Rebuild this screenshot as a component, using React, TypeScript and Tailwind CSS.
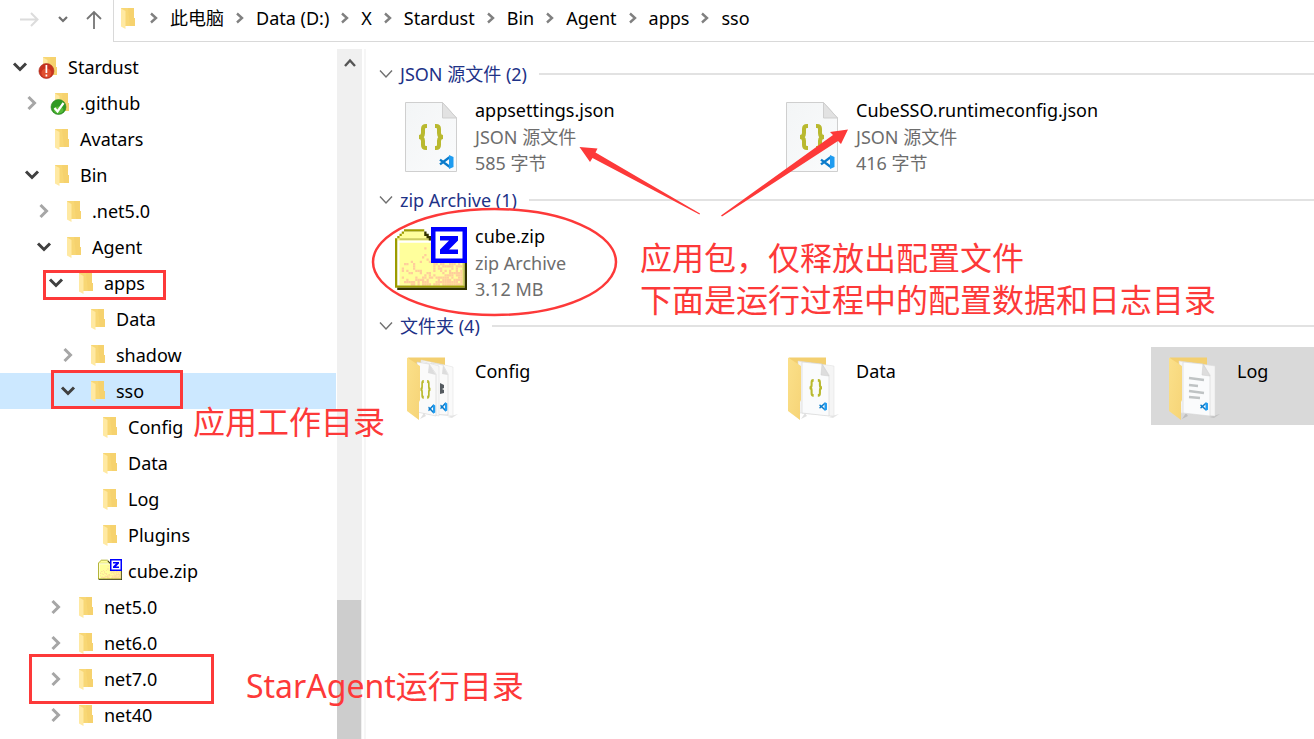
import type { ReactNode } from 'react';

type NodeIcon = 'folder' | 'error' | 'ok' | 'zip';

interface TreeNode {
  name: string;
  level: number;
  state?: 'open' | 'closed';
  icon?: NodeIcon;
  selected?: boolean;
}

const tree: TreeNode[] = [
  { name: 'Stardust', level: 0, state: 'open', icon: 'error' },
  { name: '.github', level: 1, state: 'closed', icon: 'ok' },
  { name: 'Avatars', level: 1 },
  { name: 'Bin', level: 1, state: 'open' },
  { name: '.net5.0', level: 2, state: 'closed' },
  { name: 'Agent', level: 2, state: 'open' },
  { name: 'apps', level: 3, state: 'open' },
  { name: 'Data', level: 4 },
  { name: 'shadow', level: 4, state: 'closed' },
  { name: 'sso', level: 4, state: 'open', selected: true },
  { name: 'Config', level: 5 },
  { name: 'Data', level: 5 },
  { name: 'Log', level: 5 },
  { name: 'Plugins', level: 5 },
  { name: 'cube.zip', level: 5, icon: 'zip' },
  { name: 'net5.0', level: 3, state: 'closed' },
  { name: 'net6.0', level: 3, state: 'closed' },
  { name: 'net7.0', level: 3, state: 'closed' },
  { name: 'net40', level: 3, state: 'closed' },
];

const indents = ['pl-3', 'pl-6', 'pl-9', 'pl-12', 'pl-15', 'pl-18'];

const crumbs = ['此电脑', 'Data (D:)', 'X', 'Stardust', 'Bin', 'Agent', 'apps', 'sso'];

function Chevron({ open }: { open: boolean }) {
  return open ? (
    <svg viewBox="0 0 16 16" className="size-4 text-[#404040]" fill="none" stroke="currentColor" strokeWidth="3">
      <path d="M2 4.5 8 10.500 14 4.500" />
    </svg>
  ) : (
    <svg viewBox="0 0 16 16" className="size-4 text-[#a6a6a6]" fill="none" stroke="currentColor" strokeWidth="3">
      <path d="M4.500 2 10.500 8 4.500 14" />
    </svg>
  );
}

function FolderIcon({ badge }: { badge?: 'error' | 'ok' }) {
  return (
    <svg viewBox="0 0 20 24" className="h-6 w-5 shrink-0 overflow-visible">
      <path d="M5 2h13v10h1v8H8z" fill="#f8d775" />
      <path d="M12 2h6v10h1v8h-5z" fill="#f5cf69" opacity=".6" />
      <path d="M5 2.500 9.500 5v18L5 20.500z" fill="#ffe9a2" />
      {badge === 'error' && (
        <g>
          <circle cx="8.400" cy="16" r="7.500" fill="#c8321e" stroke="#a82a1c" strokeWidth=".6" />
          <ellipse cx="8.400" cy="18" rx="5" ry="4.500" fill="#e85a35" opacity=".75" />
          <path d="M8.400 10v8M8.400 19.500v2" stroke="#fff" strokeWidth="1.700" />
        </g>
      )}
      {badge === 'ok' && (
        <g>
          <circle cx="8.500" cy="16" r="7.500" fill="#2f9a24" stroke="#27801f" strokeWidth=".6" />
          <ellipse cx="8.500" cy="19" rx="5" ry="3.500" fill="#62c33c" opacity=".8" />
          <path d="m4.500 17 3 3.500 6-8.500" stroke="#fff" strokeWidth="2.200" fill="none" />
        </g>
      )}
    </svg>
  );
}

// shading dots of the archive box, denser towards the lower right corner
const dots: [number, number][] = [];
for (let y = 8; y < 25; y++) {
  for (let x = 3; x < 30; x++) {
    const weight = ((x - 3) / 27) * 0.65 + ((y - 8) / 16) * 0.5;
    const noise = (Math.abs(Math.sin(x * 12.9898 + y * 78.233)) * 437.585) % 1;
    if (noise < weight - 0.15) dots.push([x, y]);
  }
}

function ZipArt() {
  return (
    <>
      <path d="M1 4 4 1h9l3 3h15v21H1z" fill="#ffff9c" />
      <path d="M2 4h28v1H2zM30 5h1v20h-1z" fill="#cece63" />
      <path d="M1 5h29v1H1zM1 5h1v20H1z" fill="#fff" />
      {dots.map(([x, y]) => (
        <rect key={`${x}-${y}`} x={x} y={y} width="1" height="1" fill="#ffce9c" />
      ))}
      <path d="M0 4h1v21H0zM1 3h1v1H1zM2 2h1v1H2zM3 1h1v1H3zM4 0h9v1H4zM0 25h31v1H0z" fill="#9c9c00" />
      <path d="M13 1h1v1h1v1h1v2h-1V4h-1V3h-1zM31 5h1v22H1v-1h30z" fill="#313100" />
      <path d="M16 -1h16v16H16z" fill="#00f" />
      <path d="M18 1h12v12H18z" fill="#fff" />
      <path d="M20 3h8v2l-4 4h4v2h-8V9l4-4h-4z" fill="#00f" />
    </>
  );
}

function ZipIcon() {
  return (
    <svg viewBox="0 -1 32 28" className="mb-1 -mr-1 h-[21px] w-6 shrink-0">
      <ZipArt />
    </svg>
  );
}

function TileIcon({ children }: { children: ReactNode }) {
  return (
    <svg viewBox="0 0 72 76" className="mt-[3px] h-[76px] w-[72px] shrink-0">
      <defs>
        <linearGradient id="sheet" x1="0" y1="0" x2="1" y2="1">
          <stop offset="0" stopColor="#f3f5f6" />
          <stop offset="1" stopColor="#fafbfc" />
        </linearGradient>
        <linearGradient id="cover" x1="0" y1="0" x2="1" y2="1">
          <stop offset="0" stopColor="#fbe08a" />
          <stop offset="1" stopColor="#f6d477" />
        </linearGradient>
      </defs>
      {children}
    </svg>
  );
}

function CodeMark() {
  return (
    <>
      <path d="M1 4.600 10.500 11.800M1 9.400 10.500 2.200" stroke="#0a7bcb" strokeWidth="2.400" fill="none" />
      <path d="M10 0 14.500 2v10L10 14z" fill="#1f9cf0" />
    </>
  );
}

function Braces() {
  return (
    <g fill="none" stroke="#b9b92f" strokeWidth="4">
      <path d="M9 2H8Q5 2 5 5v4q0 4-4 4 4 0 4 4v4q0 3 3 3h1" />
      <path d="M17 2h1q3 0 3 3v4q0 4 4 4-4 0-4 4v4q0 3-3 3h-1" />
    </g>
  );
}

function JsonIcon() {
  return (
    <TileIcon>
      <path d="M10.500 4.500h37L61.500 20v53.500h-51z" fill="url(#sheet)" stroke="#cfcfcf" />
      <path d="M47.500 4.500V20h14z" fill="#e2e2e2" stroke="#cfcfcf" />
      <g transform="translate(23 26)">
        <Braces />
      </g>
      <g transform="translate(44 57)">
        <CodeMark />
      </g>
    </TileIcon>
  );
}

function CubeIcon() {
  return (
    <TileIcon>
      <g transform="translate(0 5.250) scale(2.250)">
        <ZipArt />
      </g>
    </TileIcon>
  );
}

function OpenFolderIcon({ kind }: { kind: 'config' | 'data' | 'log' }) {
  return (
    <TileIcon>
      <path d="M52 67 63 64 57 68z" fill="#000" opacity=".1" />
      <path d="M25 69 31 66 29 63z" fill="#000" opacity=".12" />
      <path d="M13 7.500h37V60H20z" fill="#f3cf70" />
      {kind === 'config' ? (
        <>
          <path d="M26 10 50 15l8 2v49l-30-3z" fill="#fafafa" stroke="#dcdcdc" strokeWidth=".5" />
          <path d="M36 13 48 15l5 9v41l-17-1z" fill="#fafafa" stroke="#d4d4d4" strokeWidth=".6" />
          <path d="m48 15-1 9 6 1z" fill="#ddd" />
          <path d="m45 33 4 2v3l-2 1 2 1v3l-4 1z" fill="#555b60" />
          <g transform="translate(45 52) scale(.500 .700)">
            <CodeMark />
          </g>
          <path d="m26 11 18 5v50l-18-4z" fill="#f7f7f7" stroke="#d9d9d9" strokeWidth=".5" />
          <path d="m22 12 12 2 7 10v42l-19-4z" fill="#fafafa" stroke="#d4d4d4" strokeWidth=".6" />
          <path d="m34 14-1 9 8 2z" fill="#ddd" />
        </>
      ) : (
        <>
          <path d="M22 11 58 16v50l-34-3z" fill="#f5f5f5" stroke="#dcdcdc" strokeWidth=".5" />
          <path d="m26 12 20 2 7 11v41l-27-3z" fill="#fafbfc" stroke="#d4d4d4" strokeWidth=".6" />
          <path d="m46 14-1 11 8 1z" fill="#ddd" stroke="#ccc" strokeWidth=".5" />
        </>
      )}
      {kind === 'log' ? (
        <path d="m32 28 15 2m-15 5 9 1m-9 5 15 2m-15 4 11 1" stroke="#bfc3c4" strokeWidth="2.500" fill="none" />
      ) : (
        <g transform={kind === 'data' ? 'translate(33 29) scale(.520 .680)' : 'translate(25 30) scale(.420 .720)'}>
          <Braces />
        </g>
      )}
      <g transform={kind === 'config' ? 'translate(33 54) scale(.500 .700)' : 'translate(43 52) scale(.550 .650)'}>
        <CodeMark />
      </g>
      <path d="M12 7.500 25 16v34l-1 2v18L12 61z" fill="url(#cover)" />
    </TileIcon>
  );
}

interface TileProps {
  icon: ReactNode;
  name: string;
  details?: string[];
  selected?: boolean;
}

function Tile({ icon, name, details, selected }: TileProps) {
  return (
    <li className={`flex h-[78px] gap-2 pl-1.5 ${selected ? 'bg-[#d9d9d9]' : ''}`}>
      {icon}
      <div className={`leading-[26px] whitespace-nowrap ${details ? 'pt-0.5' : 'pt-[11px]'}`}>
        <p className="mb-px text-black">{name}</p>
        {details?.map((line) => (
          <p key={line} className="text-[#6d6d6d]">{line}</p>
        ))}
      </div>
    </li>
  );
}

function Group({ title, children }: { title: string; children: ReactNode }) {
  return (
    <section className="mb-1.5">
      <h2 className="flex h-[42px] items-center text-[#1e3287]">
        <button type="button" aria-label={`折叠 ${title}`} className="mr-1.5 ml-3">
          <svg viewBox="0 0 16 16" className="size-4" fill="none" stroke="#707070" strokeWidth="1.400">
            <path d="m2 4.500 6 6.500 6-6.500" />
          </svg>
        </button>
        {title}
        <span className="ml-3 h-0.5 flex-1 bg-[#e2e2e2]" />
      </h2>
      <ul className="grid grid-cols-[repeat(3,381px)] pl-[23px]">{children}</ul>
    </section>
  );
}

function TreeRow({ node }: { node: TreeNode }) {
  return (
    <li className={`flex h-9 items-center gap-2.5 ${indents[node.level]} ${node.selected ? 'bg-[#cce8ff]' : ''}`}>
      {node.state ? (
        <button type="button" aria-label={node.name} className="size-4 shrink-0">
          <Chevron open={node.state === 'open'} />
        </button>
      ) : (
        <span className="size-4 shrink-0" />
      )}
      {node.icon === 'zip' ? (
        <ZipIcon />
      ) : (
        <FolderIcon badge={node.icon === 'error' || node.icon === 'ok' ? node.icon : undefined} />
      )}
      <span>{node.name}</span>
    </li>
  );
}

function Annotations() {
  return (
    <div className="pointer-events-none absolute inset-0 overflow-hidden text-[32px] leading-[42px] whitespace-nowrap text-[#fd3939]">
      <svg className="absolute inset-0 size-full" fill="none" stroke="#fd3939" strokeWidth="3">
        <rect x="44.500" y="271.500" width="120" height="27" />
        <rect x="52.500" y="371.500" width="129" height="36" />
        <rect x="30.500" y="655.500" width="182" height="47" />
        <ellipse cx="494.500" cy="262" rx="121.500" ry="53" strokeWidth="2.500" />
        <g fill="#fd3939" stroke="none">
          <path d="m579.500 147 18 1.500-2 4L700 213.500l-.500 1L592.500 158l-2.500 4z" />
          <path d="m848 129.500-18 2.500 3 3-112 80.500 1 1 116-75.500 3 3z" />
        </g>
      </svg>
      <p className="absolute top-[401px] left-[193px]">应用工作目录</p>
      <p className="absolute top-[237px] left-[640px]">
        应用包，仅释放出配置文件
        <br />
        下面是运行过程中的配置数据和日志目录
      </p>
      <p className="absolute top-[665px] left-[246px]">StarAgent运行目录</p>
    </div>
  );
}

export default function App() {
  return (
    <div className="relative flex min-h-screen flex-col overflow-hidden bg-white font-['Noto_Sans','Noto_Sans_CJK_SC',sans-serif] text-lg text-black">
      <header className="flex h-[42px]">
        <div className="flex w-[113px] shrink-0 items-center pb-0.5">
          <button type="button" aria-label="前进" className="ml-[19px]">
            <svg viewBox="0 0 20 20" className="size-5" fill="none" stroke="#dcdcdc" strokeWidth="2">
              <path d="M1 9.500h17M12 3l6.500 6.500L12 16" />
            </svg>
          </button>
          <button type="button" aria-label="最近的位置" className="ml-[19px]">
            <svg viewBox="0 0 10 10" className="size-2.5" fill="none" stroke="#707070" strokeWidth="2.200">
              <path d="m1 2 4 4 4-4" />
            </svg>
          </button>
          <button type="button" aria-label="向上" className="ml-[17px]">
            <svg viewBox="0 0 18 20" className="h-5 w-[18px]" fill="none" stroke="#757575" strokeWidth="1.800">
              <path d="M9 19V2M2 9l7-7 7 7" />
            </svg>
          </button>
        </div>
        <nav className="flex flex-1 items-center border-b border-l border-[#d9d9d9] pb-1.5 pl-0.5 whitespace-nowrap">
          <FolderIcon />
          <ol className="ml-0.5 flex items-center">
            {crumbs.map((crumb) => (
              <li key={crumb} className="flex items-center">
                <svg viewBox="0 0 8 12" className="mx-3 h-3 w-2" fill="none" stroke="#808080" strokeWidth="2.400">
                  <path d="m1 1.500 5 4.500-5 4.500" />
                </svg>
                <a href="#">{crumb}</a>
              </li>
            ))}
          </ol>
        </nav>
      </header>

      <div className="flex flex-1 pt-[7px]">
        <aside className="flex w-[366px] shrink-0 border-r-2 border-[#f6f6f6]">
          <ul className="mr-px flex-1">
            {tree.map((node, i) => (
              <TreeRow key={i} node={node} />
            ))}
          </ul>
          <div className="mr-0.5 flex w-[25px] flex-col justify-between bg-[#f0f0f0]">
            <button type="button" aria-label="向上滚动" className="flex h-7 items-center justify-center">
              <svg viewBox="0 0 12 10" className="h-2.5 w-3" fill="none" stroke="#555" strokeWidth="2.400">
                <path d="m1 8 5-5.500L11 8" />
              </svg>
            </button>
            <div className="mr-px h-[139px] bg-[#cdcdcd]" />
          </div>
        </aside>

        <main className="min-w-0 flex-1 overflow-hidden pt-1">
          <Group title="JSON 源文件 (2)">
            <Tile icon={<JsonIcon />} name="appsettings.json" details={['JSON 源文件', '585 字节']} />
            <Tile icon={<JsonIcon />} name="CubeSSO.runtimeconfig.json" details={['JSON 源文件', '416 字节']} />
          </Group>
          <Group title="zip Archive (1)">
            <Tile icon={<CubeIcon />} name="cube.zip" details={['zip Archive', '3.12 MB']} />
          </Group>
          <Group title="文件夹 (4)">
            <Tile icon={<OpenFolderIcon kind="config" />} name="Config" />
            <Tile icon={<OpenFolderIcon kind="data" />} name="Data" />
            <Tile icon={<OpenFolderIcon kind="log" />} name="Log" selected />
          </Group>
        </main>
      </div>

      <Annotations />
    </div>
  );
}
